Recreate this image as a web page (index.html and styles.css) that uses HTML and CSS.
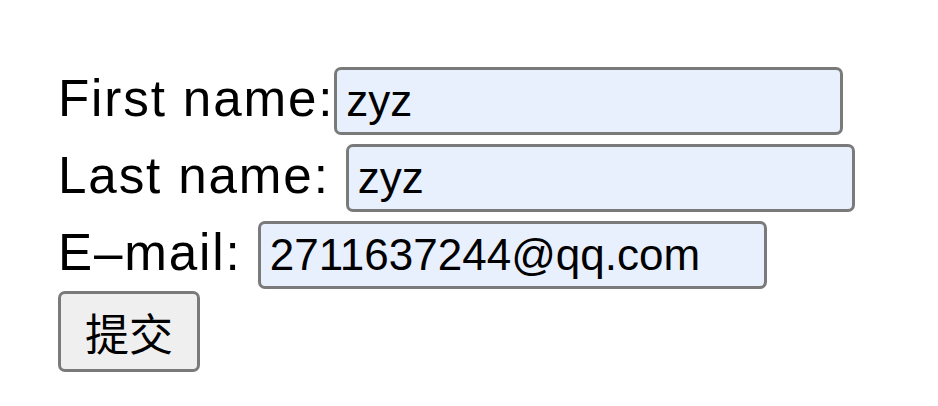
FILE: index.html
```html
<!DOCTYPE html>
<html lang="zh">
<head>
<meta charset="utf-8">
<title>Form</title>
<link rel="stylesheet" href="styles.css">
</head>
<body>
<form class="form" action="#">
  <div class="row">
    <span class="label">First name:</span>
    <input class="field" type="text" name="firstname" value="zyz">
  </div>
  <div class="row">
    <span class="label">Last name: </span>
    <input class="field" type="text" name="lastname" value="zyz">
  </div>
  <div class="row">
    <span class="label">E–mail: </span>
    <input class="field" type="email" name="email" value="2711637244@qq.com">
  </div>
  <div class="actions">
    <button class="submit" type="submit">提交</button>
  </div>
</form>
</body>
</html>
```
FILE: styles.css
```css
html, body {
  margin: 0;
  padding: 0;
  background: #ffffff;
}

body {
  font-family: "Liberation Sans", Arial, "Noto Sans CJK SC", sans-serif;
  color: #000000;
}

.form {
  display: flex;
  flex-direction: column;
  align-items: flex-start;
  padding: 67px 0 0 58px;
}

.row {
  display: flex;
  align-items: baseline;
}

.row + .row {
  margin-top: 9px;
}

.label {
  font-size: 51.2px;
  line-height: normal;
  letter-spacing: 1.85px;
  white-space: pre;
}

.field {
  box-sizing: border-box;
  width: 509px;
  height: 68px;
  margin: 0;
  padding: 0 9px;
  border: 3px solid #7a7a7a;
  border-radius: 7px;
  background: #e8f0fe;
  font-family: "Liberation Sans", Arial, sans-serif;
  font-size: 44px;
  color: #000000;
  outline: none;
}

.actions {
  margin-top: 2px;
}

.submit {
  box-sizing: border-box;
  width: 142px;
  height: 81px;
  margin: 0;
  padding: 0;
  border: 3px solid #7a7a7a;
  border-radius: 7px;
  background: #efefef;
  font-family: "Noto Sans CJK SC", sans-serif;
  font-size: 44px;
  line-height: 1;
  color: #000000;
}
```
